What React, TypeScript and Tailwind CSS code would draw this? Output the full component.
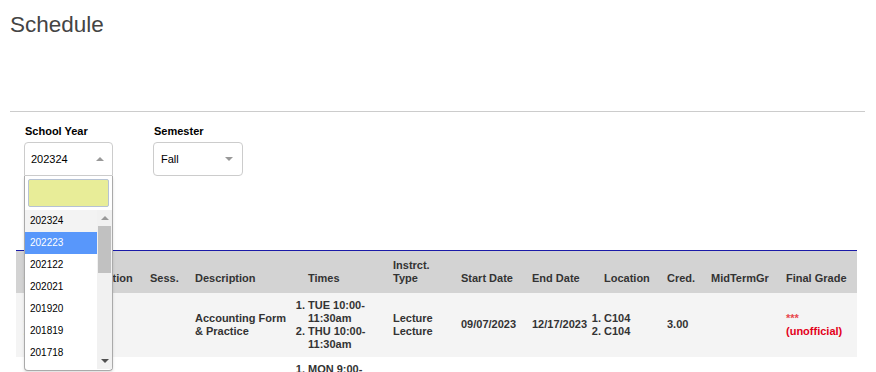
const years = ["202324", "202223", "202122", "202021", "201920", "201819", "201718", "201617"];

const rows = [
  {
    course: "ACCT 2301",
    section: "01",
    sess: "",
    desc: "Accounting Form & Practice",
    times: ["TUE 10:00-", "THU 10:00-"],
    type: ["Lecture", "Lecture"],
    start: "09/07/2023",
    end: "12/17/2023",
    loc: ["C104", "C104"],
    cred: "3.00",
    bg: "bg-[#f4f4f4]",
  },
  {
    course: "ECON 2302",
    section: "02",
    sess: "",
    desc: "Principles of Microeconomics",
    times: ["MON 9:00-", "WED 9:00-"],
    type: ["Lecture", "Lecture"],
    start: "09/07/2023",
    end: "12/17/2023",
    loc: ["B210", "B210"],
    cred: "3.00",
    bg: "bg-white",
  },
];

const ends = ["11:30am", "10:15am"];

function Caret({ up }: { up?: boolean }) {
  return (
    <span
      className={
        up
          ? "h-0 w-0 border-x-[4px] border-b-[4px] border-x-transparent border-b-[#999]"
          : "h-0 w-0 border-x-[4px] border-t-[4px] border-x-transparent border-t-[#999]"
      }
    />
  );
}

function YearDropdown() {
  return (
    <div className="absolute left-0 top-full z-10 h-[195px] w-[89px] rounded-b-[4px] border border-t-0 border-[#aaa] bg-white shadow-[0_2px_3px_rgba(0,0,0,0.12)]">
      <div className="px-[3px] pt-[3px]">
        <div className="h-[28px] rounded-[2px] border border-[#b6c2d4] bg-[#e8ed98]" />
      </div>
      <div className="mt-[3px] flex h-[159px] overflow-hidden">
        <ul className="flex-1">
          {years.map((y, i) => (
            <li
              key={y}
              className={
                i === 1
                  ? "h-[22px] bg-[#5897fb] pl-[5px] text-[10px] leading-[22px] text-white"
                  : i === 0
                    ? "h-[22px] bg-[#f3f3f3] pl-[5px] text-[10px] leading-[22px] text-black"
                    : "h-[22px] pl-[5px] text-[10px] leading-[22px] text-black"
              }
            >
              {y}
            </li>
          ))}
        </ul>
        <div className="flex w-[15px] flex-col items-center bg-[#f1f1f1]">
          <div className="flex h-[16px] items-center justify-center">
            <Caret up />
          </div>
          <div className="h-[47px] w-[13px] bg-[#c1c1c1]" />
          <div className="flex-1" />
          <div className="flex h-[16px] items-center justify-center">
            <span className="h-0 w-0 border-x-[4px] border-t-[4px] border-x-transparent border-t-[#505050]" />
          </div>
        </div>
      </div>
    </div>
  );
}

export default function App() {
  return (
    <div className="min-h-[372px] bg-white font-['Liberation_Sans',Arial,sans-serif] text-[#333]">
      <div className="pl-[10px] pr-[11px]">
        <h1 className="pt-[13px] text-[22.5px] font-normal leading-[24px] text-[#444]">Schedule</h1>
        <div className="mt-[74px] border-t border-[#ccc]" />

        <div className="mt-[13px] flex gap-[40px] pl-[14px]">
          <div className="w-[89px]">
            <label className="block pl-[1px] text-[11px] font-bold leading-[13px] text-black">School Year</label>
            <div className="relative mt-[4px]">
              <div className="flex h-[34px] items-center justify-between rounded-t-[4px] border border-[#ccc] pl-[6px] pr-[8px] text-[11px] text-black">
                <span>202324</span>
                <Caret up />
              </div>
              <YearDropdown />
            </div>
          </div>
          <div className="w-[90px]">
            <label className="block pl-[1px] text-[11px] font-bold leading-[13px] text-black">Semester</label>
            <div className="mt-[4px] flex h-[34px] items-center justify-between rounded-[4px] border border-[#ccc] pl-[7px] pr-[9px] text-[11px] text-black">
              <span>Fall</span>
              <Caret />
            </div>
          </div>
        </div>

        <table className="ml-[6px] mt-[74px] w-[841px] table-fixed border-collapse border-t border-[#1a1aa8] text-left text-[11px] font-bold leading-[13px] text-[#333]">
          <colgroup>
            <col className="w-[69px]" />
            <col className="w-[57px]" />
            <col className="w-[45px]" />
            <col className="w-[113px]" />
            <col className="w-[85px]" />
            <col className="w-[68px]" />
            <col className="w-[71px]" />
            <col className="w-[72px]" />
            <col className="w-[63px]" />
            <col className="w-[44px]" />
            <col className="w-[75px]" />
            <col className="w-[79px]" />
          </colgroup>
          <thead>
            <tr className="h-[42px] bg-[#d3d3d3]">
              {["Course", "Section", "Sess.", "Description", "Times", "Instrct. Type", "Start Date", "End Date", "Location", "Cred.", "MidTermGr", "Final Grade"].map(
                (h) => (
                  <th
                    key={h}
                    className={
                      h === "Instrct. Type"
                        ? "px-2 pb-[8px] pt-[7px] align-bottom font-bold"
                        : "whitespace-nowrap px-2 pb-[8px] pt-[7px] align-bottom font-bold"
                    }
                  >
                    {h}
                  </th>
                ),
              )}
            </tr>
          </thead>
          <tbody>
            {rows.map((r, ri) => (
              <tr key={r.course} className={r.bg}>
                <td className="px-2 py-[6px] align-middle">{r.course}</td>
                <td className="px-2 py-[6px] align-middle">{r.section}</td>
                <td className="px-2 py-[6px] align-middle">{r.sess}</td>
                <td className="px-2 py-[6px] align-middle">{r.desc}</td>
                <td className="px-2 py-[6px] align-middle">
                  <ol className="list-outside list-decimal">
                    {r.times.map((t, i) => (
                      <li key={i}>
                        {t}
                        <wbr />
                        {ends[ri]}
                      </li>
                    ))}
                  </ol>
                </td>
                <td className="px-2 py-[6px] align-middle">
                  {r.type.map((t, i) => (
                    <div key={i}>{t}</div>
                  ))}
                </td>
                <td className="whitespace-nowrap px-2 py-[6px] align-middle">{r.start}</td>
                <td className="whitespace-nowrap px-2 py-[6px] align-middle">{r.end}</td>
                <td className="px-2 py-[6px] align-middle">
                  <ol className="list-outside list-decimal">
                    {r.loc.map((l, i) => (
                      <li key={i}>{l}</li>
                    ))}
                  </ol>
                </td>
                <td className="px-2 py-[6px] align-middle">{r.cred}</td>
                <td className="px-2 py-[6px] align-middle"></td>
                <td className="whitespace-nowrap px-2 py-[6px] align-middle text-[#e3001b]">
                  <div className="text-[#e8474f]">***</div>
                  <div>(unofficial)</div>
                </td>
              </tr>
            ))}
          </tbody>
        </table>
      </div>
    </div>
  );
}
